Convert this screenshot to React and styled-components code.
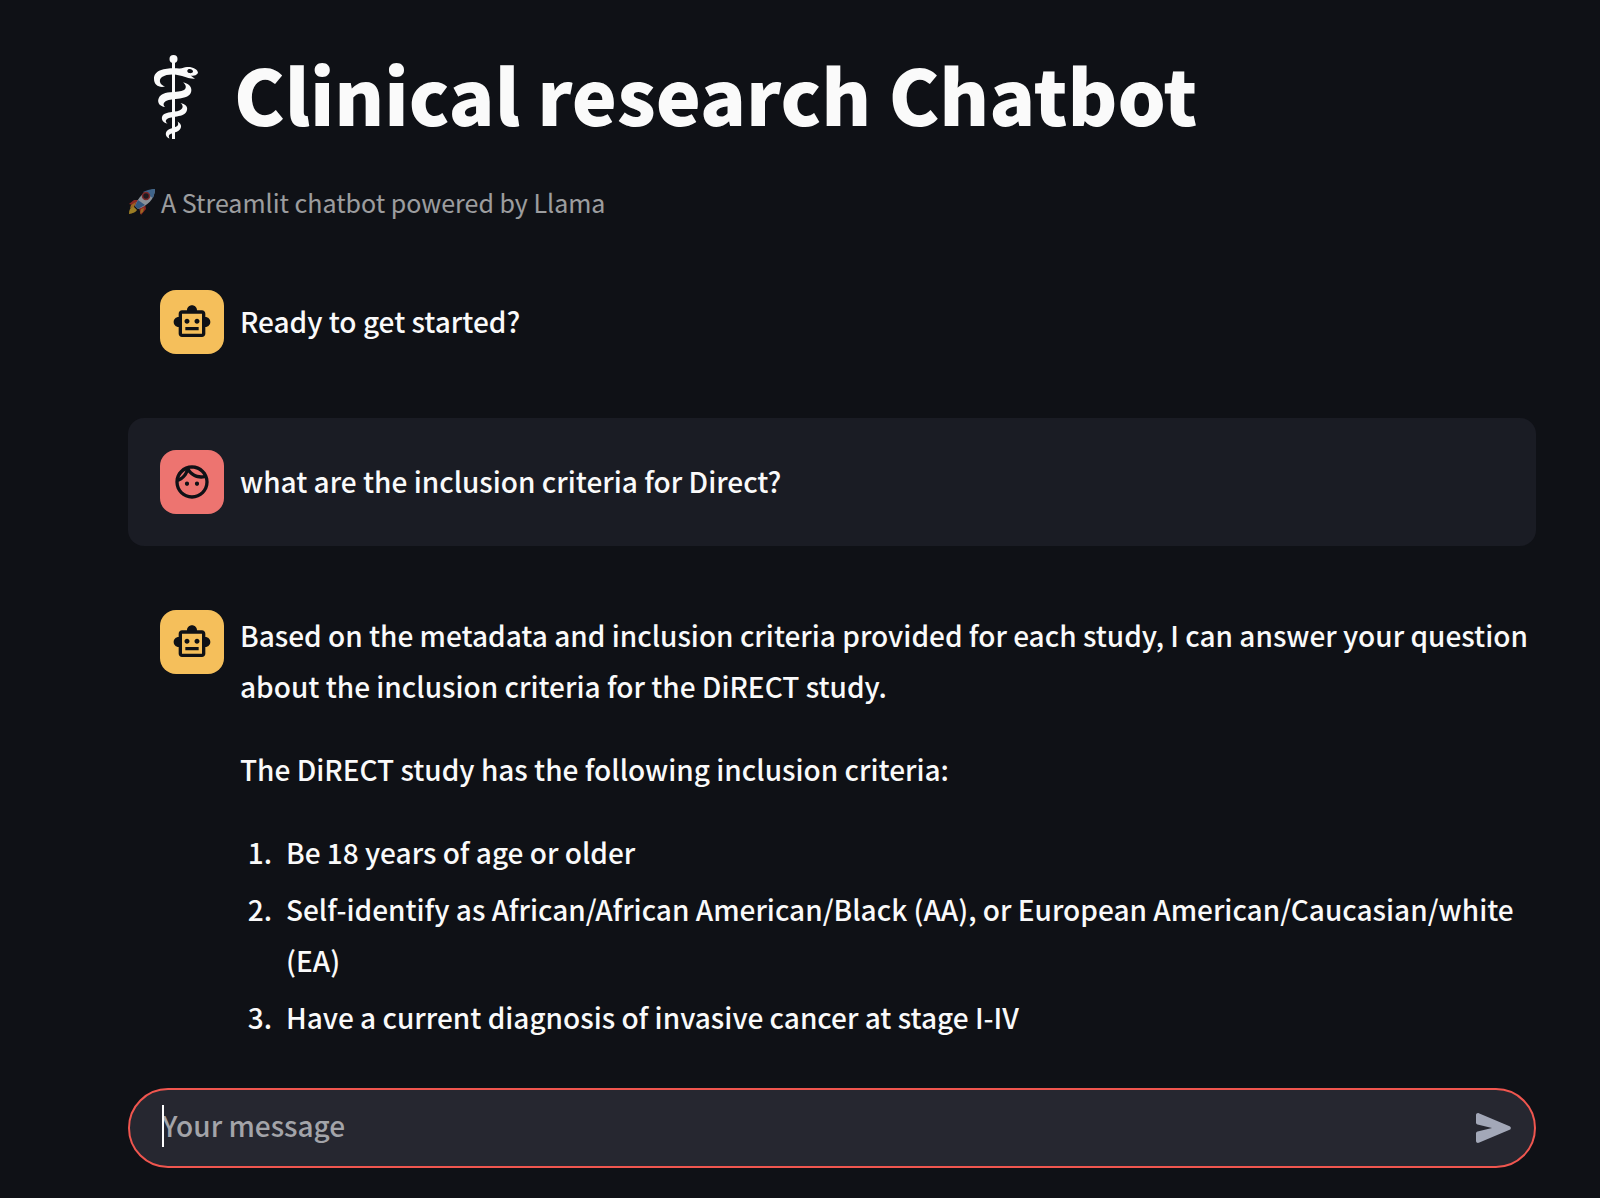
import React, { useState } from "react";
import styled, { createGlobalStyle } from "styled-components";

const GlobalStyle = createGlobalStyle`
  *, *::before, *::after { box-sizing: border-box; }
  body {
    margin: 0;
    background: #0f1116;
    color: #fafafa;
    font-family: "Noto Sans CJK SC", "Noto Sans", sans-serif;
    font-size: 28px;
    font-weight: 500;
    line-height: 51px;
  }
`;

const Page = styled.div`
  min-height: 100vh;
  display: flex;
  flex-direction: column;
  padding: 40px 64px 30px 128px;
`;

const Conversation = styled.main`
  flex: 1;
`;

const Title = styled.h1`
  display: flex;
  align-items: flex-start;
  gap: 32px;
  margin: 0;
  padding-left: 26px;
  font-size: 76px;
  line-height: 106px;
  font-weight: 900;

  svg { margin-top: 15px; }
`;

const Caption = styled.p`
  display: flex;
  align-items: center;
  gap: 5px;
  margin: 36px 0 36px;
  font-size: 25px;
  font-weight: 400;
  line-height: 40px;
  opacity: 0.6;
`;

const Messages = styled.div`
  display: flex;
  flex-direction: column;
  gap: 32px;
`;

const Message = styled.article`
  display: flex;
  gap: 16px;
  padding: 32px 0 32px 32px;
  border-radius: 16px;
  background: ${(p) => (p.$user ? "#1a1c24" : "transparent")};
`;

const Avatar = styled.div`
  flex: none;
  display: grid;
  place-items: center;
  width: 64px;
  height: 64px;
  border-radius: 16px;
  background: ${(p) => (p.$user ? "#ed7470" : "#f5bf5b")};
  color: #0f1116;
`;

const Content = styled.div`
  flex: 1;
  min-width: 0;
  align-self: ${(p) => (p.$short ? "center" : "flex-start")};
  padding-bottom: ${(p) => (p.$short ? "2px" : "0")};
`;

const Paragraph = styled.p`
  margin: 0 0 32px;
  &:last-child { margin-bottom: 0; }
`;

const Criteria = styled.ol`
  display: flex;
  flex-direction: column;
  gap: 6px;
  margin: 0;
  padding-left: 46px;

  li::marker { content: counter(list-item) ".\\2002"; }
`;

const ChatBox = styled.form`
  display: flex;
  align-items: center;
  height: 80px;
  padding: 0 16px 0 32px;
  border: 2px solid #f0564f;
  border-radius: 40px;
  background: #262730;
`;

const Field = styled.label`
  position: relative;
  flex: 1;
  display: flex;
`;

const Caret = styled.span`
  position: absolute;
  left: 0;
  top: 3px;
  width: 2px;
  height: 42px;
  background: #ffffff;
`;

const Input = styled.input`
  width: 100%;
  height: 52px;
  padding: 0 0 6px;
  border: 0;
  outline: 0;
  background: transparent;
  color: #fafafa;
  font: inherit;
  &::placeholder { color: #a3a4a9; opacity: 1; }
`;

const SendButton = styled.button`
  display: grid;
  place-items: center;
  padding: 0;
  border: 0;
  background: transparent;
  color: #a3a8b8;
  cursor: pointer;
`;

const StaffIcon = () => (
  <svg width="48" height="84" viewBox="0 0 48 84" fill="currentColor" aria-hidden="true">
    <circle cx="19.5" cy="4" r="4" />
    <path d="M18 6h3v78h-3z" />
    <path
      fillRule="evenodd"
      d="M44 18C44 14 38 11.500 33 12C30 12 28 14 25 13.500C16 13 0 13 0 24C0 30 5 33 11 31.500C6 30 4 25 8 22C13 18.500 22 19 28 21C33 22.500 37 24 41 23.700L36.500 20.500C39 21 42 21 44 18zM34 14.500c2-1 5 0 5 2s-4 2-5 1-1-2 0-3z"
    />
    <path d="M29 27.500C34 28 38 31.500 37.300 36C36.500 41 32 42.500 26 43.500C20 44.500 15 44.500 12 46C9 48 9 50 11 52C6 51.500 3.500 48 4.300 44.500C5.500 40 9 38 16 37.300C22 36.700 27 36.500 30 35C33 33 32 29.500 29 27.500z" />
    <path d="M26.500 48C31 49 34 51.500 33 55C32 59.500 28 60.500 23 61.500C19 62.500 15 62.500 13 64C11 65.500 11.500 67 13.500 68.500C9.500 68 7.300 65 8 62C9 58.500 13 57.500 18 57C22 56.500 25 56 27 54.500C29.500 52.500 29 50 26.500 48z" />
    <path d="M23.500 66.500C26.500 68 28 71 26.500 73.500C25 76.500 22 77 19 78C16 79 13.500 80 15.500 83.500C12 82.500 11 79 12.500 76.500C14 74 17 73.500 20 72.500C24 71.500 25 69.500 23.500 66.500z" />
  </svg>
);

const RocketIcon = () => (
  <svg width="28" height="28" viewBox="0 0 28 28" aria-hidden="true">
    <path d="M1 16l5-4h6l-4 6z" fill="#e0392c" />
    <path d="M11 20l6-4 1 5-5 6z" fill="#e0392c" />
    <path d="M1 26c0-4 1-6 4-8l4 4c-2 3-4 3-8 4z" fill="#f9c52e" />
    <path d="M3 17l5-3-2 5-4 1zM12 26l1-5 3-1-1 4z" fill="#f9a02a" />
    <path d="M7 18C10 9 17 2 27 1c0 10-8 17-17 20z" fill="#dbe6ef" />
    <path d="M15 4c4-2 8-3 12-3 0 3-1 6-2 9z" fill="#5f9bd6" />
    <path d="M7 18l3-6 7 5-7 4z" fill="#4c86c4" />
    <circle cx="18" cy="8" r="3.500" fill="#2b2028" stroke="#c43a38" strokeWidth="1.500" />
  </svg>
);

const BotIcon = () => (
  <svg width="40" height="40" viewBox="0 0 24 24" fill="currentColor" aria-hidden="true">
    <path d="M20 9V7c0-1.100-.9-2-2-2h-3c0-1.660-1.340-3-3-3S9 3.340 9 5H6c-1.100 0-2 .9-2 2v2c-1.660 0-3 1.340-3 3s1.340 3 3 3v4c0 1.100.9 2 2 2h12c1.100 0 2-.9 2-2v-4c1.660 0 3-1.340 3-3s-1.340-3-3-3zm-2 10H6V7h12v12zm-9-6c-.83 0-1.500-.67-1.500-1.500S8.170 10 9 10s1.500.67 1.500 1.500S9.830 13 9 13zm7.500-1.500c0 .83-.67 1.500-1.500 1.500s-1.500-.67-1.500-1.500.67-1.500 1.500-1.500 1.500.67 1.500 1.500zM8 15h8v2H8v-2z" />
  </svg>
);

const FaceIcon = () => (
  <svg width="40" height="40" viewBox="0 0 24 24" fill="currentColor" aria-hidden="true">
    <path d="M10.250 13c0 .69-.56 1.250-1.250 1.250S7.750 13.690 7.750 13s.56-1.250 1.250-1.250 1.250.56 1.250 1.250zM15 11.750c-.69 0-1.250.56-1.250 1.250s.56 1.250 1.250 1.250 1.250-.56 1.250-1.250-.56-1.250-1.250-1.250zm7 .25c0 5.520-4.480 10-10 10S2 17.520 2 12 6.480 2 12 2s10 4.480 10 10zM10.660 4.120C12.060 6.440 14.600 8 17.500 8c.46 0 .91-.05 1.340-.12C17.440 5.560 14.900 4 12 4c-.46 0-.91.05-1.340.12zM4.420 9.470c1.710-.97 3.030-2.550 3.660-4.440-1.710.97-3.030 2.550-3.660 4.440zM20 12c0-.78-.12-1.530-.33-2.240-.7.15-1.420.24-2.170.24-3.130 0-5.920-1.440-7.760-3.690C8.690 8.870 6.600 10.880 4 11.860c.01.04 0 .09 0 .14 0 4.410 3.590 8 8 8s8-3.590 8-8z" />
  </svg>
);

const SendIcon = () => (
  <svg width="48" height="48" viewBox="0 0 24 24" fill="currentColor" aria-hidden="true">
    <path d="M3 5.510v3.710c0 .46.31.86.76.97L11 12l-7.240 1.810c-.45.12-.76.52-.76.98v3.710c0 .72.73 1.200 1.390.92l15.420-6.490c.82-.34.82-1.500 0-1.840L4.390 4.580C3.730 4.310 3 4.790 3 5.510z" />
  </svg>
);

export default function App() {
  const [text, setText] = useState("");
  return (
    <Page>
      <GlobalStyle />
      <Conversation>
        <Title>
          <StaffIcon />
          Clinical research Chatbot
        </Title>
        <Caption>
          <RocketIcon />
          A Streamlit chatbot powered by Llama
        </Caption>
        <Messages>
          <Message>
            <Avatar><BotIcon /></Avatar>
            <Content $short>
              <Paragraph>Ready to get started?</Paragraph>
            </Content>
          </Message>
          <Message $user>
            <Avatar $user><FaceIcon /></Avatar>
            <Content $short>
              <Paragraph>what are the inclusion criteria for Direct?</Paragraph>
            </Content>
          </Message>
          <Message>
            <Avatar><BotIcon /></Avatar>
            <Content>
              <Paragraph>
                Based on the metadata and inclusion criteria provided for each study, I can answer your
                question about the inclusion criteria for the DiRECT study.
              </Paragraph>
              <Paragraph>The DiRECT study has the following inclusion criteria:</Paragraph>
              <Criteria>
                <li>Be 18 years of age or older</li>
                <li>
                  Self-identify as African/African American/Black (AA), or European
                  American/Caucasian/white (EA)
                </li>
                <li>Have a current diagnosis of invasive cancer at stage I-IV</li>
              </Criteria>
            </Content>
          </Message>
        </Messages>
      </Conversation>
      <ChatBox onSubmit={(e) => { e.preventDefault(); setText(""); }}>
        <Field>
          <Input
            aria-label="Your message"
            placeholder="Your message"
            value={text}
            onChange={(e) => setText(e.target.value)}
          />
          {text === "" && <Caret />}
        </Field>
        <SendButton type="submit" aria-label="Send message"><SendIcon /></SendButton>
      </ChatBox>
    </Page>
  );
}
